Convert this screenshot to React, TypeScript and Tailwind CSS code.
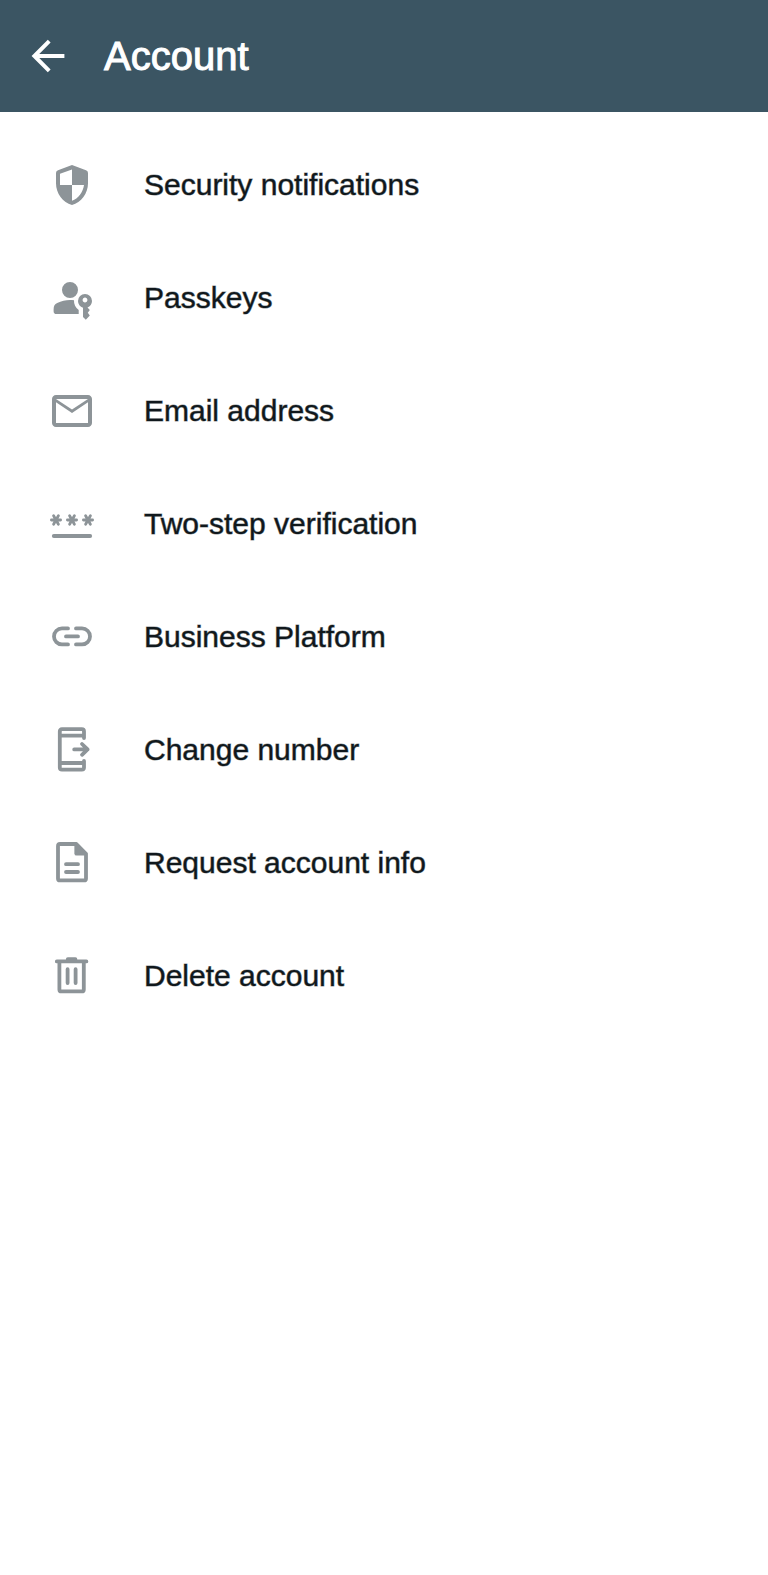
import type { ReactNode } from 'react'

type Item = {
  label: string
  icon: ReactNode
}

const items: Item[] = [
  {
    label: 'Security notifications',
    icon: (
      <path
        fill="currentColor"
        fillRule="evenodd"
        d="M12 2 5 4.600Q4 5 4 6v5.090c0 5.050 3.410 9.660 8 10.910 4.590-1.250 8-5.860 8-10.910V6q0-1-1-1.400L12 2Zm0 2.200V12H6V6.400L12 4.200ZM12 12h6c-.4 3.500-2.900 6.800-6 7.900V12Z"
      />
    ),
  },
  {
    label: 'Passkeys',
    icon: (
      <path
        fill="currentColor"
        d="M4.200 20Q2.800 20 2.800 18.600v-.8q0-1.450.438-2.162T4.600 14.550q1.550-.775 3.150-1.163T11 13q.5 0 1 .038t1 .112q-.1 1.450.525 2.738T15.350 18v2zm14.700 2.900-1.400-1.400v-4.650q-1.100-.325-1.800-1.237T15 13.500q0-1.450 1.025-2.475T18.500 10t2.475 1.025T22 13.500q0 1.125-.638 2t-1.612 1.250L20.900 18l-1 1.400 1 1.400zM11 12q-1.650 0-2.825-1.175T7 8t1.175-2.825T11 4t2.825 1.175T15 8t-1.175 2.825T11 12m7.500 2.200q.500 0 .850-.350T19.700 13t-.350-.850T18.500 11.800t-.850.350T17.300 13t.350.850.850.350"
      />
    ),
  },
  {
    label: 'Email address',
    icon: (
      <path
        fill="currentColor"
        d="M22 6c0-1.100-.9-2-2-2H4c-1.100 0-2 .9-2 2v12c0 1.100.9 2 2 2h16c1.100 0 2-.9 2-2V6zm-2 0-8 5.200L4 6h16zm0 12H4V7.600l8 5.400 8-5.400V18z"
      />
    ),
  },
  {
    label: 'Two-step verification',
    icon: (
      <g stroke="currentColor" strokeLinecap="round">
        <path strokeWidth={1.400} d="M1.700 10h4.600M2.800 7.900l2.400 4.200M5.200 7.900l-2.400 4.200" />
        <path strokeWidth={1.400} d="M9.700 10h4.600M10.800 7.900l2.400 4.200M13.200 7.900l-2.400 4.200" />
        <path strokeWidth={1.400} d="M17.700 10h4.600M18.800 7.900l2.400 4.200M21.200 7.900l-2.400 4.200" />
        <path strokeWidth={1.900} d="M2.900 18h18.200" />
      </g>
    ),
  },
  {
    label: 'Business Platform',
    icon: (
      <path
        stroke="currentColor"
        strokeWidth={1.900}
        strokeLinecap="round"
        d="M10 7.700H7a4 4 0 0 0 0 8h3M14 7.700h3a4 4 0 0 1 0 8h-3M9 11.700h6"
      />
    ),
  },
  {
    label: 'Change number',
    icon: (
      <g stroke="currentColor" strokeWidth={1.900} strokeLinecap="round" strokeLinejoin="round">
        <path d="M18 6V2.700q0-1.100-1.100-1.100H7q-1.100 0-1.100 1.100v18q0 1.100 1.100 1.100h9.900q1.100 0 1.100-1.100v-3.200" />
        <path strokeLinecap="butt" d="M6 4.800h12M6 18.500h12" />
        <path d="M13.100 11.700h6.700M17 9l2.800 2.700L17 14.400" />
      </g>
    ),
  },
  {
    label: 'Request account info',
    icon: (
      <>
        <path
          stroke="currentColor"
          strokeWidth={1.900}
          strokeLinejoin="round"
          d="M14.200 2.500H6Q5 2.500 5 3.500v16.200q0 1 1 1H18q1 0 1-1V7.400z"
        />
        <path fill="currentColor" d="M13.200 2v5.200q0 1.100 1.100 1.100H19.500z" />
        <path stroke="currentColor" strokeWidth={1.900} strokeLinecap="round" d="M9 12.600h6M9 16.500h6" />
      </>
    ),
  },
  {
    label: 'Delete account',
    icon: (
      <g stroke="currentColor" strokeWidth={1.900} strokeLinecap="round" strokeLinejoin="round">
        <path d="M5.700 5v13.700q0 1 1 1h10.200q1 0 1-1V5" />
        <path d="M4.400 4.700h14.800M9.900 3.600h3.800" />
        <path d="M9.800 8.600v6.900M13.800 8.600v6.900" />
      </g>
    ),
  },
]

export default function App() {
  return (
    <div className="min-h-screen bg-white font-['Liberation_Sans',Arial,sans-serif]">
      <header className="flex h-28 items-center gap-8 bg-[#3b5563] px-6 text-white">
        <button type="button" aria-label="Back" className="shrink-0">
          <svg className="size-12" viewBox="0 0 24 24" fill="none" aria-hidden="true">
            <path stroke="currentColor" strokeWidth={2} d="M20.200 12H5M12.600 4.600 5.200 12l7.400 7.400" />
          </svg>
        </button>
        <h1 className="text-[40px] leading-12 [-webkit-text-stroke:1px]">Account</h1>
      </header>

      <main className="py-4">
        <ul>
          {items.map(item => (
            <li key={item.label}>
              <button
                type="button"
                className="flex h-[113px] w-full items-center gap-12 px-12 text-left text-[30px] leading-10 text-[#10181c] [-webkit-text-stroke:1px_#10181c80]"
              >
                <svg className="size-12 shrink-0 text-[#8d9498]" viewBox="0 0 24 24" fill="none" aria-hidden="true">
                  {item.icon}
                </svg>
                <span>{item.label}</span>
              </button>
            </li>
          ))}
        </ul>
      </main>
    </div>
  )
}
